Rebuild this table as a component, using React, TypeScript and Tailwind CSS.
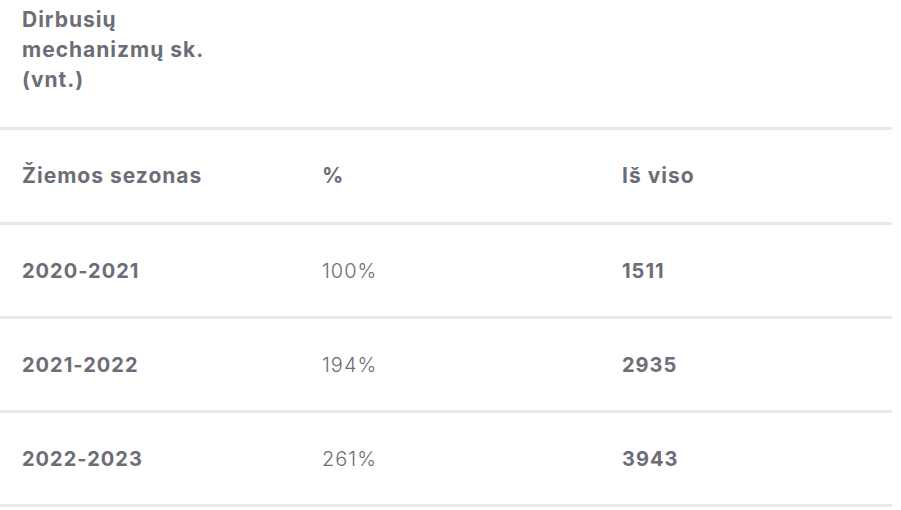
import React from "react";

const rows = [
  { season: "2020-2021", pct: "100%", total: "1511" },
  { season: "2021-2022", pct: "194%", total: "2935" },
  { season: "2022-2023", pct: "261%", total: "3943" },
];

export default function App() {
  return (
    <div
      className="w-[901px] h-[510px] bg-white text-[#6b6e76] overflow-hidden"
      style={{ fontFamily: "Inter, 'Noto Sans', sans-serif" }}
    >
      <div className="w-[892px]">
        <div className="pl-[22px] pt-[5px] h-[130px] border-b-[3px] border-[#e9e9eb]">
          <div className="text-[21px] leading-[30px] font-bold tracking-[1px]">
            Dirbusių
            <br />
            mechanizmų sk.
            <br />
            (vnt.)
          </div>
        </div>
        <div className="grid grid-cols-[300px_300px_292px] h-[95px] border-b-[3px] border-[#e9e9eb] items-center text-[21px] font-bold tracking-[1px]">
          <div className="pl-[22px]">Žiemos sezonas</div>
          <div className="pl-[22px]">%</div>
          <div className="pl-[22px]">Iš viso</div>
        </div>
        {rows.map((r) => (
          <div
            key={r.season}
            className="grid grid-cols-[300px_300px_292px] h-[94px] border-b-[3px] border-[#e9e9eb] items-center text-[20px] tracking-[1px]"
          >
            <div className="pl-[22px] font-bold">{r.season}</div>
            <div className="pl-[22px] font-light">{r.pct}</div>
            <div className="pl-[22px] font-bold">{r.total}</div>
          </div>
        ))}
      </div>
    </div>
  );
}
